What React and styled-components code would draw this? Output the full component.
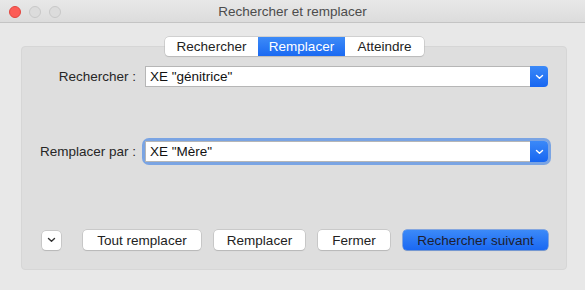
import styled, { createGlobalStyle } from "styled-components";

const GlobalStyle = createGlobalStyle`
  * { margin: 0; padding: 0; box-sizing: border-box; }
  body {
    background: #e8e8e8;
    font-family: "Liberation Sans", Arial, sans-serif;
    font-size: 13.5px;
    color: #222;
  }
`;

function Chevron({ color = "#fff" }) {
  return (
    <svg width="9" height="6" viewBox="0 0 9 6">
      <path d="M1.5 1.5 L4.5 4.3 L7.5 1.5" fill="none" stroke={color} strokeWidth="1.4" strokeLinecap="round" strokeLinejoin="round" />
    </svg>
  );
}

function Combo({ value, focused }) {
  return (
    <ComboBox $focused={focused}>
      <ComboInput>{value}</ComboInput>
      <ComboArrow>
        <Chevron />
      </ComboArrow>
    </ComboBox>
  );
}

export default function App() {
  return (
    <>
      <GlobalStyle />
      <Window>
        <TitleBar>
          <Lights>
            <Light $color="#fc5d57" $border="#e2463f" />
            <Light $color="#dcdcdc" $border="#c8c8c8" />
            <Light $color="#dcdcdc" $border="#c8c8c8" />
          </Lights>
          <Title>Rechercher et remplacer</Title>
        </TitleBar>
        <Body>
          <Tabs>
            <Tab>Rechercher</Tab>
            <Tab $active>Remplacer</Tab>
            <Tab>Atteindre</Tab>
          </Tabs>
          <Panel>
            <Form>
              <Label>Rechercher :</Label>
              <Combo value={'XE "génitrice"'} />
              <Spacer />
              <Label>Remplacer par :</Label>
              <Combo value={'XE "Mère"'} focused />
            </Form>
            <Buttons>
              <SmallButton>
                <Chevron color="#333" />
              </SmallButton>
              <Button $w={118}>Tout remplacer</Button>
              <Button $w={91}>Remplacer</Button>
              <Button $w={72}>Fermer</Button>
              <Button $w={145} $primary>Rechercher suivant</Button>
            </Buttons>
          </Panel>
        </Body>
      </Window>
    </>
  );
}

const Window = styled.div`
  width: 585px;
  height: 290px;
  background: #e8e8e8;
  overflow: hidden;
`;

const TitleBar = styled.div`
  height: 23px;
  padding-top: 1px;
  background: linear-gradient(#e8e8e8, #dcdcdc);
  border-bottom: 1px solid #c4c4c4;
  display: flex;
  align-items: center;
  position: relative;
`;

const Lights = styled.div`
  display: flex;
  gap: 8px;
  padding-left: 9px;
`;

const Light = styled.span`
  width: 12px;
  height: 12px;
  border-radius: 50%;
  background: ${(p) => p.$color};
  border: 0.5px solid ${(p) => p.$border};
`;

const Title = styled.div`
  position: absolute;
  left: 0;
  right: 0;
  text-align: center;
  color: #4c4c4c;
  font-size: 13.5px;
`;

const Body = styled.div`
  padding: 14px 18px 0 21px;
  display: flex;
  flex-direction: column;
`;

const Tabs = styled.div`
  align-self: flex-start;
  margin-left: 144px;
  display: flex;
  height: 19px;
  background: #fff;
  border-radius: 4px;
  box-shadow: 0 0 0 0.5px #b8b8b8, 0 1px 1px rgba(0, 0, 0, 0.15);
  position: relative;
  z-index: 1;
  overflow: hidden;
`;

const Tab = styled.div`
  display: flex;
  align-items: center;
  justify-content: center;
  width: ${(p) => p.$w || 79}px;
  font-size: 13.5px;
  color: ${(p) => (p.$active ? "#fff" : "#222")};
  background: ${(p) => (p.$active ? "linear-gradient(#3d8bf7, #1a69f2)" : "transparent")};
  &:first-child { width: 93px; }
  &:nth-child(2) { width: 87px; }
`;

const Panel = styled.div`
  margin-top: -10px;
  background: #dedede;
  border: 1px solid #d6d6d6;
  border-radius: 4px;
  height: 224px;
  padding: 19px 18px 0 0;
  display: flex;
  flex-direction: column;
`;

const Form = styled.div`
  display: grid;
  grid-template-columns: 114px 403px;
  column-gap: 9px;
  grid-template-rows: 21px 54px 21px;
  align-items: center;
`;

const Spacer = styled.div`
  grid-column: 1 / -1;
`;

const Label = styled.div`
  text-align: right;
  color: #262626;
  font-size: 13.5px;
  white-space: nowrap;
`;

const ComboBox = styled.div`
  display: flex;
  height: 21px;
  border-radius: 4px;
  box-shadow: ${(p) =>
    p.$focused ? "0 0 0 3px rgba(80, 140, 230, 0.7)" : "none"};
`;

const ComboInput = styled.div`
  flex: 1;
  background: #fff;
  border: 1px solid #b6b6b6;
  border-right: none;
  padding: 0 4px;
  display: flex;
  align-items: center;
  font-size: 13.5px;
  color: #111;
`;

const ComboArrow = styled.div`
  width: 18px;
  background: linear-gradient(#3b89f8, #1766f1);
  border-radius: 0 4px 4px 0;
  display: flex;
  align-items: center;
  justify-content: center;
`;

const Buttons = styled.div`
  margin-top: 68px;
  margin-left: 20px;
  display: flex;
  align-items: center;
  gap: 13px;
`;

const SmallButton = styled.div`
  width: 19px;
  height: 19px;
  margin-right: 9px;
  background: #fff;
  border-radius: 4px;
  box-shadow: 0 0 0 0.5px #b4b4b4, 0 1px 1px rgba(0, 0, 0, 0.15);
  display: flex;
  align-items: center;
  justify-content: center;
`;

const Button = styled.div`
  width: ${(p) => p.$w}px;
  height: 20px;
  border-radius: 4px;
  display: flex;
  align-items: center;
  justify-content: center;
  font-size: 13.5px;
  color: ${(p) => (p.$primary ? "#1d2030" : "#222")};
  background: ${(p) => (p.$primary ? "linear-gradient(#3c8af8, #1a68f2)" : "#fff")};
  box-shadow: ${(p) =>
    p.$primary
      ? "0 0 0 0.5px #2a6ee0, 0 1px 1px rgba(0, 0, 0, 0.15)"
      : "0 0 0 0.5px #b4b4b4, 0 1px 1px rgba(0, 0, 0, 0.15)"};
`;
